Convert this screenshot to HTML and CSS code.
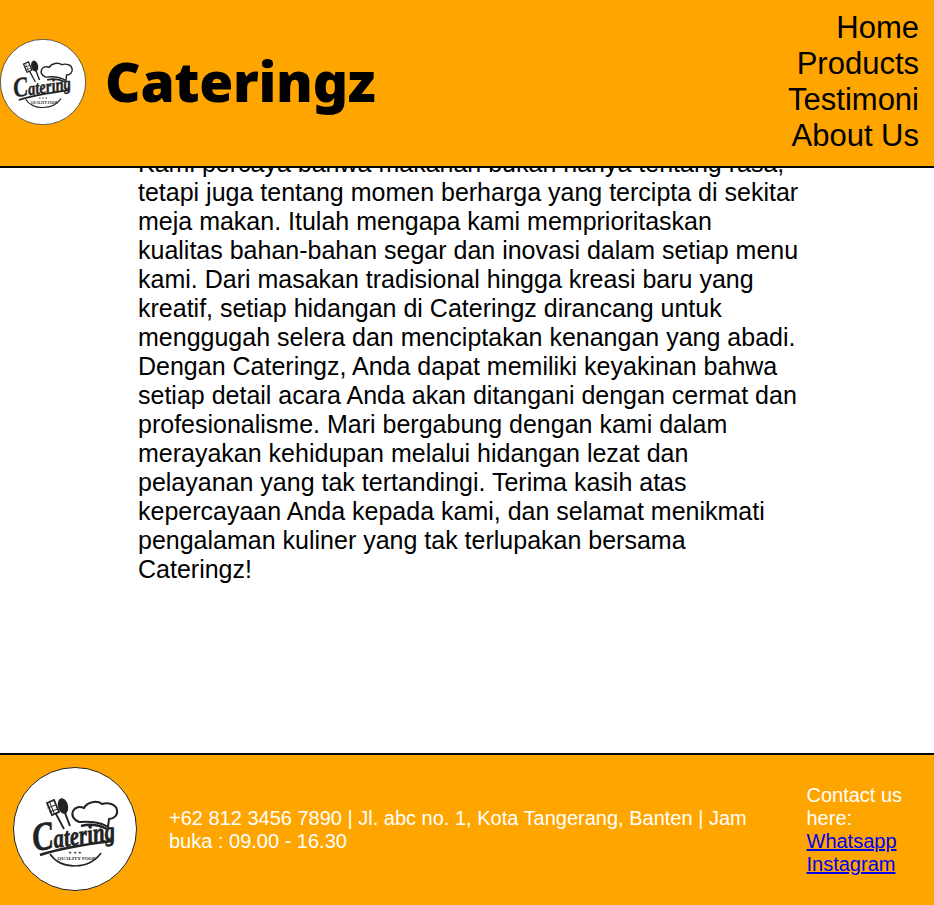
FILE: index.html
```html
<!DOCTYPE html>
<html lang="en">
<head>
    <meta charset="UTF-8">
    <meta name="viewport" content="width=device-width, initial-scale=1.0">
    <title>Cateringz</title>
    <link rel="stylesheet" href="styles.css">
</head>
<body>
    <svg class="sprite" aria-hidden="true">
        <symbol id="logo" viewBox="0 0 124 124">
            <circle cx="62" cy="62" r="61.500" fill="#fff" stroke="#222" stroke-width="1"/>
            <!-- fork -->
            <path d="M34 36l7-3 5 12-7 3zM43 47l8 15" fill="none" stroke="#222" stroke-width="1.800"/>
            <path d="M36.500 35l5 12M34.500 41l8-3M36.500 45l8-3" stroke="#222" stroke-width="1"/>
            <!-- spoon -->
            <ellipse cx="50" cy="39" rx="5" ry="8" transform="rotate(-14 50 39)" fill="#222"/>
            <path d="M52 46l5 13" stroke="#222" stroke-width="2"/>
            <!-- hat -->
            <path d="M66 55c-5-2-8-6-6-11 2-4 7-5 11-3 3-6 13-8 18-4 6-2 14 0 15 6 1 5-3 9-8 9l-1 8c-8-5-20-6-28-5z" fill="#fff" stroke="#222" stroke-width="2"/>
            <path d="M68 59c8-2 18-1 26 3" fill="none" stroke="#222" stroke-width="2.500"/>
            <!-- lettering -->
            <text class="logo-script" transform="translate(21 84) rotate(-8) scale(0.780 1)"><tspan class="logo-cap">C</tspan>atering</text>
            <path d="M27 88C48 81 75 77 99 74" fill="none" stroke="#222" stroke-width="2.500"/>
            <text class="logo-stars" x="62" y="87" text-anchor="middle">★ ★ ★</text>
            <text class="logo-small" x="64" y="93" text-anchor="middle">QUALITY FOOD</text>
            <path d="M37 87C48 103 76 103 88 86" fill="none" stroke="#222" stroke-width="1.500"/>
        </symbol>
    </svg>

    <header class="site-header">
        <div class="brand">
            <svg class="brand-logo"><use href="#logo"/></svg>
            <span class="brand-name">Cateringz</span>
        </div>
        <nav class="nav">
            <a href="#">Home</a>
            <a href="#">Products</a>
            <a href="#">Testimoni</a>
            <a href="#">About Us</a>
        </nav>
    </header>

    <main class="content">
        <p>Kami percaya bahwa makanan bukan hanya tentang rasa, tetapi juga tentang momen berharga yang tercipta di sekitar meja makan. Itulah mengapa kami memprioritaskan kualitas bahan-bahan segar dan inovasi dalam setiap menu kami. Dari masakan tradisional hingga kreasi baru yang kreatif, setiap hidangan di Cateringz dirancang untuk menggugah selera dan menciptakan kenangan yang abadi. Dengan Cateringz, Anda dapat memiliki keyakinan bahwa setiap detail acara Anda akan ditangani dengan cermat dan profesionalisme. Mari bergabung dengan kami dalam merayakan kehidupan melalui hidangan lezat dan pelayanan yang tak tertandingi. Terima kasih atas kepercayaan Anda kepada kami, dan selamat menikmati pengalaman kuliner yang tak terlupakan bersama Cateringz!</p>
    </main>

    <footer class="site-footer">
        <svg class="footer-logo"><use href="#logo"/></svg>
        <p class="footer-info">+62 812 3456 7890 | Jl. abc no. 1, Kota Tangerang, Banten | Jam buka : 09.00 - 16.30</p>
        <div class="footer-contact">
            Contact us here:<br>
            <a href="#">Whatsapp</a><br>
            <a href="#">Instagram</a>
        </div>
    </footer>
</body>
</html>
```

FILE: styles.css
```css
body {
    font-family: 'Liberation Sans', Arial, sans-serif;
    margin: 0;
    min-height: 905px;
    display: flex;
    flex-direction: column;
    background-color: white;
    color: black;
}

.sprite {
    display: none;
}

.site-header {
    position: fixed;
    top: 0;
    left: 0;
    right: 0;
    height: 166px;
    display: flex;
    justify-content: space-between;
    align-items: center;
    background-color: orange;
    border-bottom: 2px solid black;
}

.brand {
    display: flex;
    align-items: center;
    gap: 19px;
    margin-bottom: 3px;
}

.brand-logo {
    width: 86px;
    height: 86px;
}

.brand-name {
    font-family: 'Noto Sans', sans-serif;
    font-size: 55px;
    font-weight: 900;
    line-height: 1;
    letter-spacing: -0.300px;
    padding-bottom: 2px;
}

.nav {
    display: flex;
    flex-direction: column;
    align-items: flex-end;
    padding-right: 15px;
    padding-bottom: 2px;
    font-size: 31px;
    line-height: 36px;
}

.nav a {
    color: black;
    text-decoration: none;
}

.content {
    flex: 1;
    padding: 149px 134px 0 138px;
    font-size: 25px;
    line-height: 29px;
}

.content p {
    margin: 0;
}

.site-footer {
    display: flex;
    align-items: center;
    height: 150px;
    padding-left: 13px;
    background-color: orange;
    border-top: 2px solid black;
    color: white;
    font-size: 20px;
    line-height: 23px;
}

.footer-logo {
    width: 124px;
    height: 124px;
    flex-shrink: 0;
    margin-bottom: 2px;
}

.footer-info {
    width: 600px;
    margin: 0 0 0 32px;
}

.footer-contact {
    width: 110px;
    margin-left: 37.500px;
}

.footer-contact a {
    color: #0000ee;
}

.logo-script {
    font-family: 'Liberation Serif', serif;
    font-size: 27px;
    font-weight: 700;
    font-style: italic;
    fill: #222;
    stroke: #222;
    stroke-width: 0.600px;
}

.logo-cap {
    font-size: 40px;
}

.logo-stars {
    font-family: 'DejaVu Sans', sans-serif;
    font-size: 4px;
    fill: #222;
}

.logo-small {
    font-family: 'Liberation Serif', serif;
    font-size: 5px;
    font-weight: 700;
    fill: #222;
}
```
